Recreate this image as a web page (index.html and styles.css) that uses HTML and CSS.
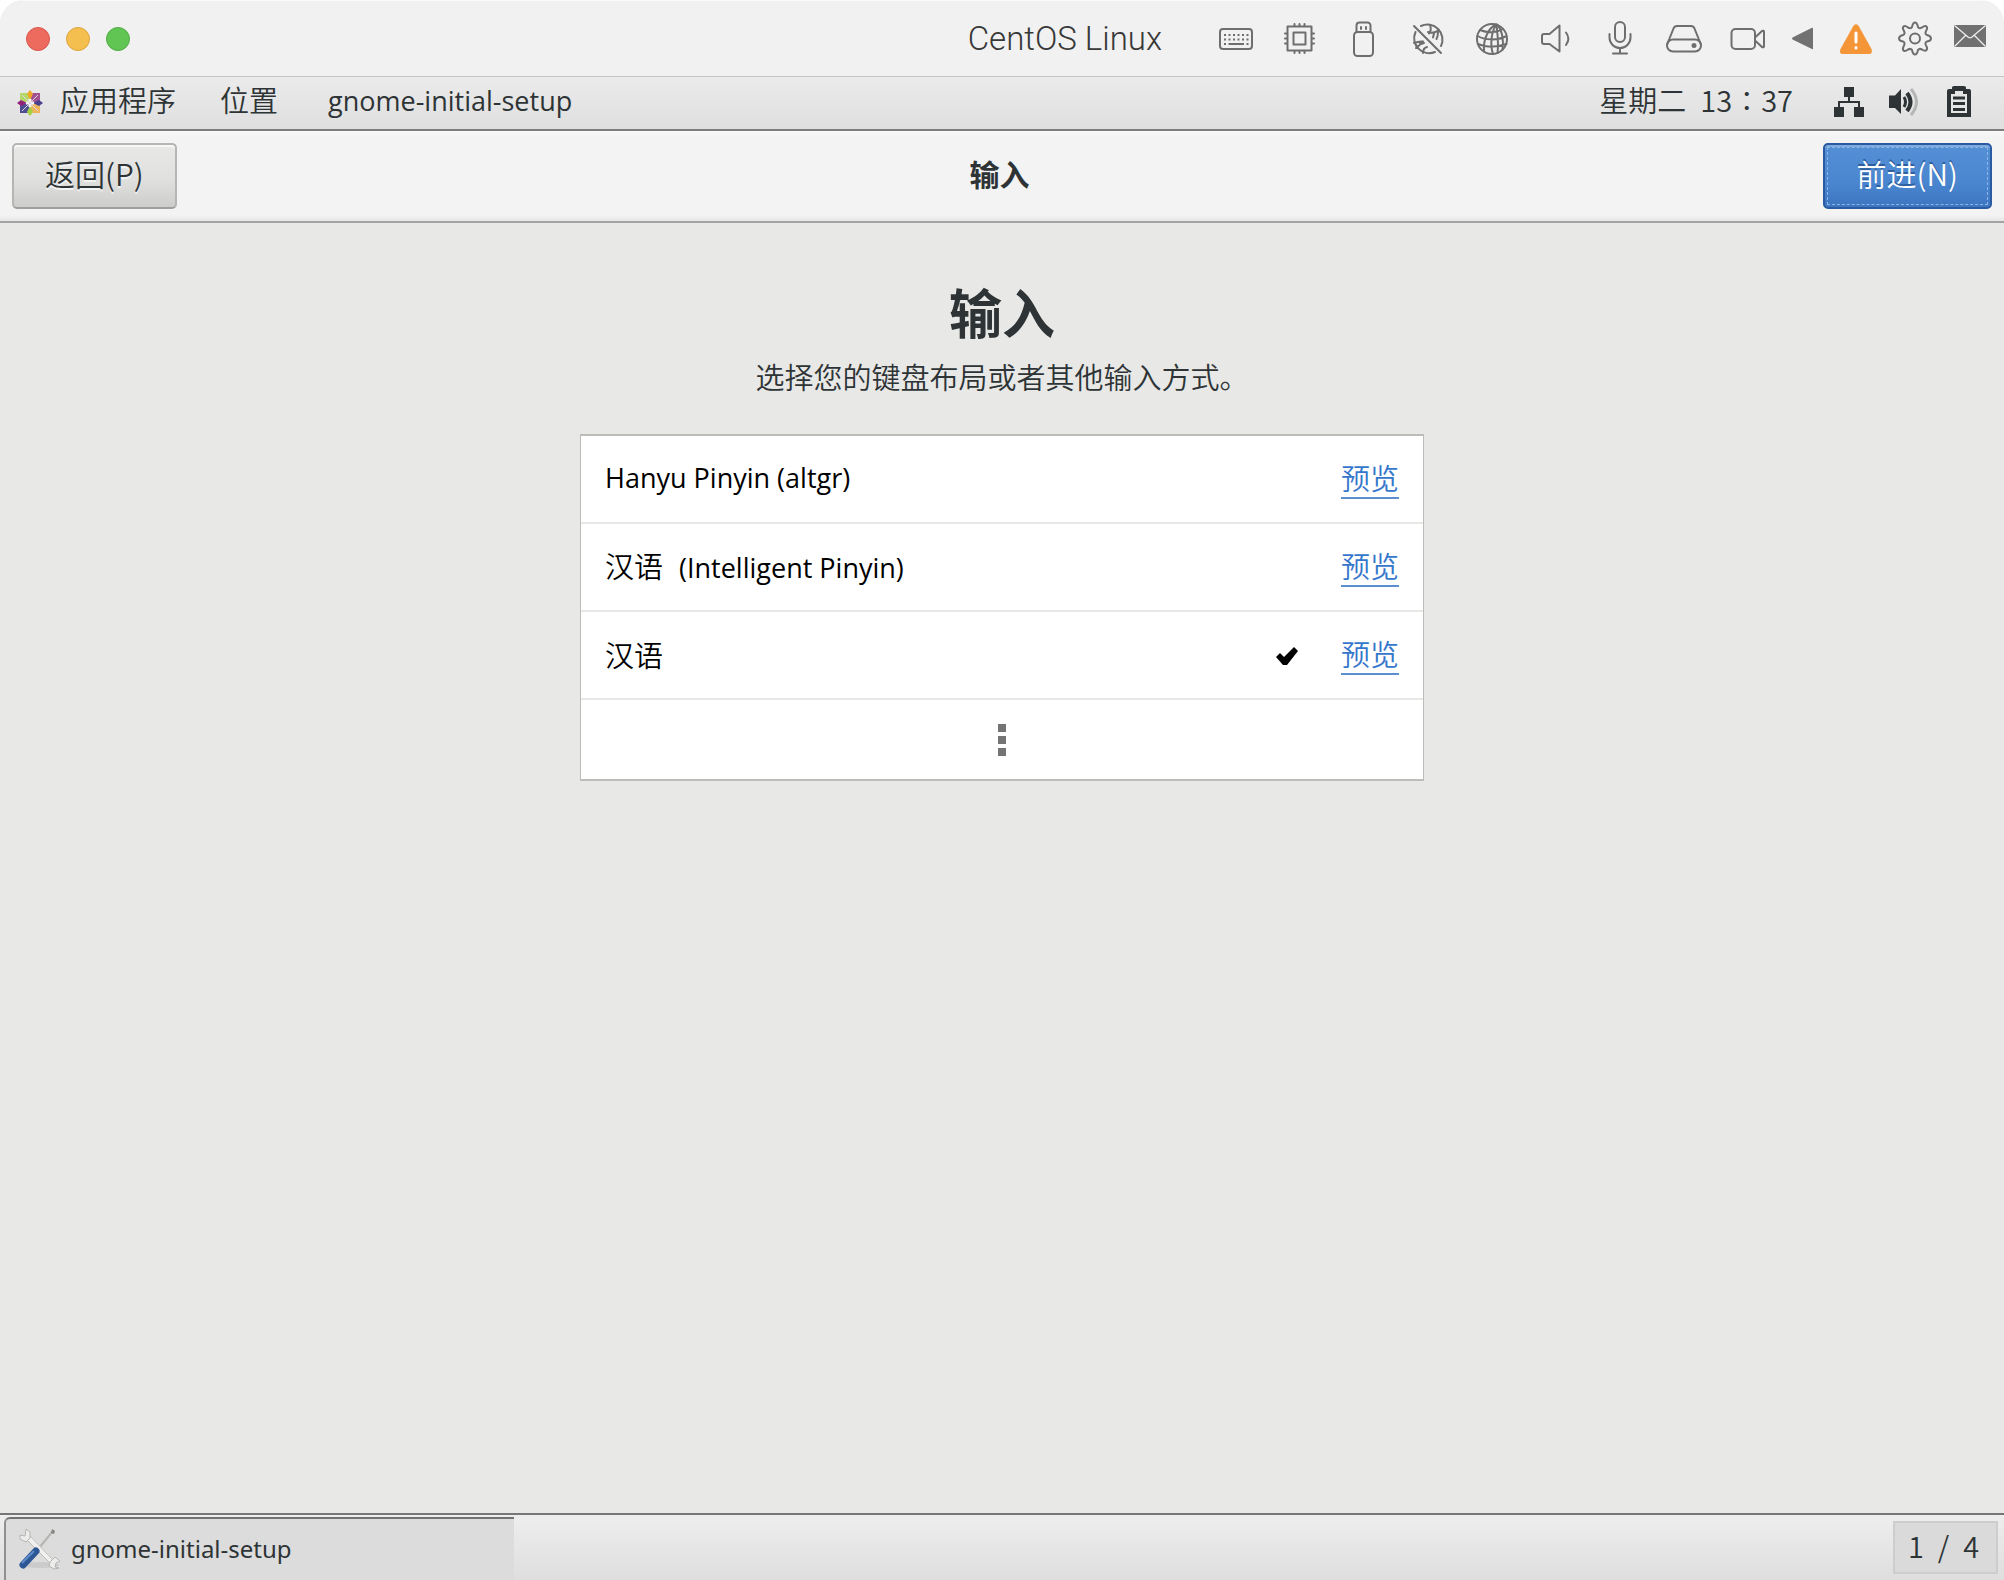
FILE: index.html
```html
<!DOCTYPE html>
<html lang="zh-CN">
<head>
<meta charset="utf-8">
<title>CentOS Linux</title>
<link rel="stylesheet" href="styles.css">
</head>
<body>
<div class="window">
  <header class="titlebar">
    <div class="lights">
      <button class="light light-close" aria-label="关闭"></button>
      <button class="light light-min" aria-label="最小化"></button>
      <button class="light light-max" aria-label="缩放"></button>
    </div>
    <h1 class="vm-name">CentOS Linux</h1>
    <div class="devices">
      <button class="tool" aria-label="键盘"><svg viewBox="0 0 40 40" class="line"><rect x="4" y="10" width="32" height="20" rx="3"/><path class="keys" d="M8 16h2M12.500 16h2M17 16h2M21.500 16h2M26 16h2M30.500 16h2M8 20.500h2M12.500 20.500h2M17 20.500h2M21.500 20.500h2M26 20.500h2M30.500 20.500h2M8 25h2M12.500 25h15.500M30.500 25h2"/></svg></button>
      <button class="tool" aria-label="处理器"><svg viewBox="0 0 40 40" class="line"><rect x="7.500" y="7.500" width="24" height="24"/><rect x="13.500" y="13.500" width="12" height="12"/><path d="M14.500 7V5M19.500 7V5M24.500 7V5M14.500 34v-2M19.500 34v-2M24.500 34v-2M7 14.500H5M7 19.500H5M7 24.500H5M34 14.500h-2M34 19.500h-2M34 24.500h-2"/></svg></button>
      <button class="tool" aria-label="USB"><svg viewBox="0 0 40 40" class="line"><rect x="10" y="13" width="19" height="24" rx="3.500"/><path d="M12.500 13V6.500a3 3 0 0 1 3-3h8a3 3 0 0 1 3 3V13M17 8v2M22 8v2"/></svg></button>
      <button class="tool" aria-label="网络已断开"><svg viewBox="0 0 40 40" class="line"><path d="M6 7l27 27M13 7a15 15 0 0 1 20 20M7.500 13a15 15 0 0 0 19.500 20"/><path class="fine" d="M22 6q2 5-1 8.500M20 13q6 2 11-2M26 14.500l-1 4M30 13q0 4-1.500 7M6 24q5-2 9-1.500M8 29q3-4 8-5M13 23q-1 3-4 6M19 28q-4 1-4 6"/></svg></button>
      <button class="tool" aria-label="网络"><svg viewBox="0 0 40 40" class="line"><circle cx="20" cy="20" r="15"/><path d="M24 5.500C17 9 11 19 12 32.500M24.500 5.500C19 13 18 26 21 35M24.500 5.500C25 12 27 23 25.500 34M25 5.500c5 5 7 16 5.500 25M8 11c7 3 17 3 23-1M5.500 17c9 5 21 4 28 .5M6 25c9 4 19 3 28.500 0"/></svg></button>
      <button class="tool" aria-label="声音"><svg viewBox="0 0 40 40" class="line"><path d="M8 15h5.500L23.500 6.500v26L13.500 25H8a2 2 0 0 1-2-2v-6a2 2 0 0 1 2-2M30 13.500c3 4 3 8.500 0 12.500"/></svg></button>
      <button class="tool" aria-label="麦克风"><svg viewBox="0 0 40 40" class="line"><rect x="15" y="3" width="10" height="20" rx="5"/><path d="M9.500 15v3.500a10.500 10.500 0 0 0 21 0V15M20 29v5.500M13 34.500h14"/></svg></button>
      <button class="tool" aria-label="硬盘"><svg viewBox="0 0 40 40" class="line"><path d="M3.500 24.500L9.500 9.500Q10.500 7 13 7h14q2.500 0 3.500 2.500l6 15"/><rect x="3" y="20.500" width="34" height="12" rx="6"/><circle cx="30" cy="26.500" r="1.500" fill="currentColor"/></svg></button>
      <button class="tool" aria-label="摄像头"><svg viewBox="0 0 40 40" class="line"><rect x="3.500" y="10" width="23.500" height="20" rx="4"/><path d="M27 18.500l7-6.500q2-1 2 1v14q0 2-2 1l-7-6.500"/></svg></button>
    </div>
    <div class="actions">
      <button class="tool" aria-label="收起"><svg viewBox="0 0 40 40"><path d="M31 9.500v20q0 1-1 .5L10.500 20.500q-1-1 0-2L29.500 9q1.500-.5 1.500.5" fill="#717171"/></svg></button>
      <button class="tool" aria-label="警告"><svg viewBox="0 0 40 40"><path d="M15 7.500q3-4.500 6 0L33.500 30q1.500 5-2.500 5H5q-4.500 0-2.500-5z" fill="#f49637"/><path d="M18 14v9M18 28.500v.5" stroke="#fff" stroke-width="3" stroke-linecap="round"/></svg></button>
      <button class="tool" aria-label="设置"><svg viewBox="0 0 40 40" class="line"><circle cx="21" cy="19.500" r="5"/><path d="M18 8Q19 3.500 21 3.500T24 8q1 2 4 .5 3-2.500 4.500-1T32 12q-1.500 3 1 4 4 1 4 3.500t-4 3q-2.500 1-1 4 2 3 .5 4.500T28 30.500q-3-1.500-4 .5-1 4.500-3 4.500T18 31q-1-2-4-.5-3 2.500-4.500 1t.5-5q1.500-3-1-4-4-.5-4-3T9 16q2.500-1 1-4-2-3-.5-4.500t4.500 1q3 1.500 4-.5z"/></svg></button>
      <button class="tool" aria-label="邮件"><svg viewBox="0 0 40 40"><path d="M4 6h32v22H4z" fill="#717171"/><path d="M4.500 6.500L18 18q2 1.500 4 0L35.500 6.500M4.500 27.500l11-11M35.500 27.500l-11-11" fill="none" stroke="#f1f1f1" stroke-width="1.200"/></svg></button>
    </div>
  </header>

  <nav class="panel">
    <button class="menu apps"><svg class="centos" viewBox="0 0 28 28" aria-hidden="true"><path d="M4 4h9v9H4z" fill="#b5d86b"/><path d="M15 4h9v9h-9z" fill="#a2508f"/><path d="M4 15h9v9H4z" fill="#4f4e92"/><path d="M15 15h9v9h-9z" fill="#efb55c"/><path d="M14 1l3 4-3 6-3-6z" fill="#efa724"/><path d="M27 14l-4 3-6-3 6-3z" fill="#45408f"/><path d="M14 27l-3-4 3-6 3 6z" fill="#a5d040"/><path d="M1 14l4-3 6 3-6 3z" fill="#932279"/><path d="M14 10v8M10 14h8" stroke="#f4f2f4" stroke-width="3"/><path d="M6 6l16 16M22 6L6 22" stroke="#dcd3de"/></svg>应用程序</button>
    <button class="menu">位置</button>
    <button class="menu latin">gnome-initial-setup</button>
    <div class="status">
      <button class="menu clock"><span>星期二</span><span>13∶37</span></button>
      <button class="tray" aria-label="有线网络"><svg viewBox="0 0 32 32"><path d="M11 1h10v10H11zM1 21h10v10H1zM21 21h10v10H21z"/><path d="M16 11v5M6 21v-5h20v5" fill="none" stroke="#2e3436" stroke-width="2"/></svg></button>
      <button class="tray" aria-label="音量"><svg viewBox="0 0 32 32"><path d="M1 9.500h6L13 3v25l-6-6H1z"/><path d="M16 11q3 5 0 10" fill="none" stroke="#2e3436" stroke-width="3"/><path d="M19 7q7 9 0 18" fill="none" stroke="#2e3436" stroke-width="4"/><path d="M23 3q11 13 0 26" fill="none" stroke="#b4b5b5" stroke-width="3"/></svg></button>
      <button class="tray" aria-label="电池"><svg viewBox="0 0 32 32"><path d="M4 31V5q0-2 2-2h3V1.500Q9 0 11 0h10q2 0 2 1.500V3h3q2 0 2 2v26z"/><path d="M8 8h4V5h8v3h4v19H8z" fill="#e6e6e6"/><path d="M10 10.500h12v3H10zM10 16h12v3H10zM10 22h12v3H10z"/></svg></button>
    </div>
  </nav>

  <div class="headerbar">
    <button class="btn">返回(P)</button>
    <h2 class="page-name">输入</h2>
    <button class="btn btn-next">前进(N)</button>
  </div>

  <main class="content">
    <h2 class="heading">输入</h2>
    <p class="subtitle">选择您的键盘布局或者其他输入方式。</p>
    <ul class="layouts">
      <li class="row"><span class="name latin">Hanyu Pinyin (altgr)</span><a class="preview" href="#">预览</a></li>
      <li class="row"><span class="name">汉语<span class="latin engine">(Intelligent Pinyin)</span></span><a class="preview" href="#">预览</a></li>
      <li class="row"><span class="name">汉语</span><svg class="check" viewBox="0 0 24 20" role="img" aria-label="已选择"><path d="M1 11l4-4 4 4L19 1l4 4-11 14H8z"/></svg><a class="preview" href="#">预览</a></li>
      <li class="row row-more"><button class="more" aria-label="更多"><svg viewBox="0 0 8 32"><path d="M0 0h8v8H0zM0 12h8v8H0zM0 24h8v8H0z" fill="#747474"/></svg></button></li>
    </ul>
  </main>

  <footer class="taskbar">
    <button class="task"><svg class="task-icon" viewBox="0 0 44 44" aria-hidden="true"><ellipse cx="22" cy="38" rx="19" ry="3" fill="#cbcbcb"/><path d="M35 4L21 21" stroke="#b4b5b1" stroke-width="2"/><path d="M34 2l3 2-1 3-3-1z" fill="#858782"/><path d="M9 9l26 27" stroke="#f0f0ee" stroke-width="5"/><path d="M8 12l25 25M12 9l24 25" stroke="#bcbdba" stroke-width="1"/><path d="M2 8l5 1 1-7 4 3v6l-4 4-6-3zM32 35l5-5 5 4-4 2-1 4 4 1-5 1-5-3z" fill="#ececea" stroke="#b4b5b2"/><path d="M18 24L5 38" stroke="#2c5794" stroke-width="7" stroke-linecap="round"/><path d="M16 24L4 36" stroke="#5f8ccb" stroke-width="2"/></svg><span>gnome-initial-setup</span></button>
    <button class="workspace"><span>1</span><span>/</span><span>4</span></button>
  </footer>
</div>
</body>
</html>
```
FILE: styles.css
```css
* { box-sizing: border-box; }

body {
  margin: 0;
  background: #fff;
  color: #2e3436;
  font-family: "Noto Sans CJK SC", sans-serif;
  font-size: 29px;
  font-weight: 350;
  line-height: 40px;
}

button {
  margin: 0;
  padding: 0;
  border: 0;
  background: none;
  color: inherit;
  font: inherit;
}

h1, h2, p, ul { margin: 0; padding: 0; }

svg { display: block; }

.latin { font-family: "Open Sans", "Noto Sans", sans-serif; font-size: 27px; font-weight: 400; }

.window {
  display: flex;
  flex-direction: column;
  min-height: 100vh;
  border-radius: 24px 24px 0 0;
  overflow: hidden;
  background: #e8e8e6;
}

/* Virtual machine title bar */
.titlebar {
  display: flex;
  align-items: center;
  height: 77px;
  padding: 0 14px 0 26px;
  border-top: 1px solid #fafafa;
  border-bottom: 1px solid #c4c4c4;
  background: #f1f1f1;
}

.lights { display: flex; gap: 16px; margin-right: auto; }

.light { width: 24px; height: 24px; border: 1px solid; border-radius: 50%; }
.light-close { background: #ed6a5e; border-color: #d8564b; }
.light-min { background: #f5bf4f; border-color: #dca53d; }
.light-max { background: #61c554; border-color: #50ab43; }

.vm-name {
  margin-right: 54px;
  padding-top: 1px;
  color: #383838;
  font-family: Roboto, "Liberation Sans", sans-serif;
  font-size: 33px;
  font-weight: 300;
}

.devices { display: flex; gap: 24px; margin-right: 14px; color: #6e6e6e; }
.actions { display: flex; gap: 16px; color: #6e6e6e; }
.tool { padding-top: 1px; }
.tool svg { width: 40px; height: 40px; }
.line { fill: none; stroke: currentColor; stroke-width: 2; stroke-linecap: round; stroke-linejoin: round; }
.keys { stroke-linecap: butt; }

/* Desktop top panel */
.panel {
  display: flex;
  align-items: center;
  gap: 44px;
  height: 54px;
  padding: 0 29px 9px 16px;
  border-bottom: 2px solid #7d7d7d;
  background: linear-gradient(#ebebeb, #dfdfdf);
}

.menu { white-space: nowrap; }
.apps { display: flex; align-items: center; gap: 16px; }
.centos { width: 28px; height: 28px; margin-top: 8px; }
.menu.latin { margin-left: 6px; padding-top: 4px; }
.status { display: flex; align-items: center; gap: 23px; margin-left: auto; }
.clock { display: flex; gap: 14px; margin-right: 17px; }
.tray { padding-top: 7px; }
.tray svg { width: 32px; height: 32px; fill: #2e3436; }

/* Assistant header */
.headerbar {
  display: flex;
  align-items: center;
  justify-content: space-between;
  height: 92px;
  padding: 0 12px;
  border-bottom: 2px solid #a3a4a1;
  background: linear-gradient(#f9f9f9, #f3f3f3 6px, #f3f3f3 84px, #e6e6e6);
}

.page-name { padding-bottom: 6px; font-size: 30px; font-weight: 700; }

.btn {
  height: 66px;
  padding: 0 31px 6px;
  border: 2px solid #b5b6b3;
  border-bottom-color: #9fa09c;
  border-radius: 5px;
  background: linear-gradient(#e8e8e7, #e0e0df 55%, #cdcecc);
  box-shadow: inset 0 2px #f8f8f8;
  font-size: 30px;
  text-shadow: 0 2px #f3f3f3;
}

.btn-next {
  padding: 0 32px 6px;
  border-color: #2a5a9f;
  background: linear-gradient(#5590d5, #4a86d0 60%, #3e76c0);
  box-shadow: inset 0 2px #7fabdf;
  color: #fff;
  text-shadow: 0 -2px #2e5f9f;
  outline: 1px dashed #8db5e8;
  outline-offset: -5px;
}

/* Keyboard layout page */
.content {
  flex: 1;
  display: flex;
  flex-direction: column;
  align-items: center;
  padding-top: 48px;
}

.heading { font-size: 53px; font-weight: 700; line-height: 80px; }
.subtitle { margin: 5px 0 38px; }

.layouts {
  width: 100%;
  max-width: 844px;
  border: 1px solid #bcbdb9;
  border-width: 2px 1px;
  background: #fff;
  color: #000;
  list-style: none;
}

.row {
  display: flex;
  align-items: center;
  height: 88px;
  padding: 0 24px 2px;
  border-bottom: 2px solid #e7e7e6;
}

.name { flex: 1; }
.engine { margin-left: 16px; }

.preview {
  border-bottom: 2px solid #5a8ed0;
  color: #3577cc;
  text-decoration: none;
  line-height: 40px;
}

.check { width: 24px; height: 20px; margin: 4px 42px 0 0; }

.row-more { height: 79px; padding-bottom: 0; justify-content: center; border-bottom: 0; }
.more svg { width: 8px; height: 32px; }

/* Desktop bottom panel */
.taskbar {
  display: flex;
  justify-content: space-between;
  height: 67px;
  padding: 2px 6px 0 4px;
  border-top: 2px solid #767676;
  background: linear-gradient(#eeeeee, #dedede);
}

.task {
  display: flex;
  align-items: center;
  gap: 9px;
  width: 510px;
  padding: 0 0 2px 12px;
  border-top: 2px solid #737373;
  border-left: 2px solid #909090;
  border-top-left-radius: 6px;
  background: #dcdcdc;
  font-family: "Noto Sans", sans-serif;
  font-size: 24px;
  font-weight: 400;
}

.task-icon { width: 44px; height: 44px; }

.workspace {
  display: flex;
  justify-content: center;
  align-items: center;
  gap: 14px;
  height: 53px;
  width: 105px;
  margin-top: 4px;
  padding: 0 4px 6px 0;
  border: 2px solid #cdcdcd;
  background: #dadada;
}
```
